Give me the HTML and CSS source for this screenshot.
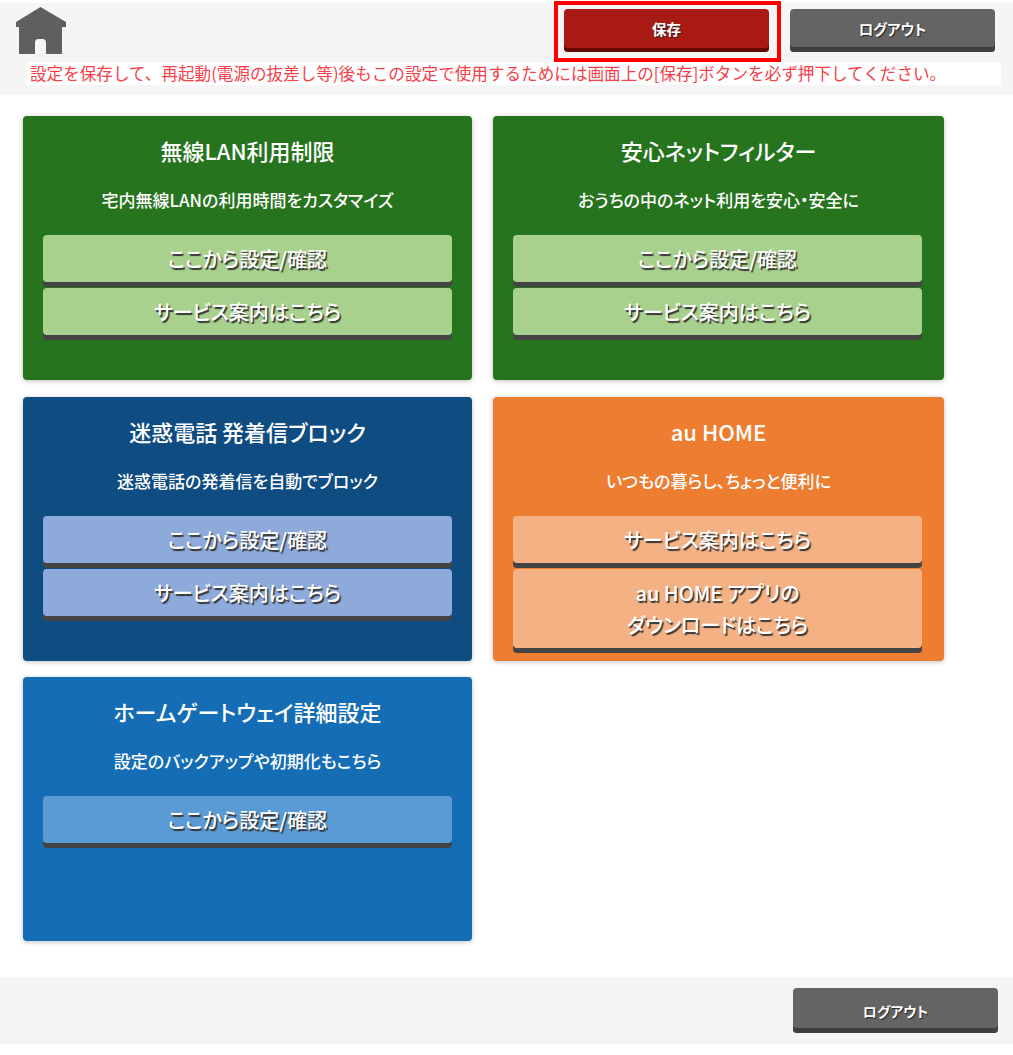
FILE: index.html
```html
<!DOCTYPE html>
<html lang="ja">
<head>
<meta charset="utf-8">
<title>ホームゲートウェイ設定</title>
<link rel="stylesheet" href="styles.css">
</head>
<body>
<header class="top">
  <div class="top-row">
    <svg class="home" viewBox="0 0 50 48" aria-label="ホーム"><path d="M24.500 0 L50 15 V20 H46 V47 H30 V36 Q30 32 26.500 32 H22.500 Q19 32 19 36 V47 H3 V20 H0 V15 Z" fill="#5f5f5f"/></svg>
    <div class="top-actions">
      <div class="save-wrap"><a class="btn-dark btn-save">保存</a></div>
      <a class="btn-dark btn-logout">ログアウト</a>
    </div>
  </div>
  <p class="notice">設定を保存して、再起動(電源の抜差し等)後もこの設定で使用するためには画面上の[保存]ボタンを必ず押下してください。</p>
</header>
<main class="grid">
  <section class="card green">
    <h2>無線LAN利用制限</h2>
    <p>宅内無線LANの利用時間をカスタマイズ</p>
    <a class="btn">ここから設定/確認</a>
    <a class="btn">サービス案内はこちら</a>
  </section>
  <section class="card green">
    <h2>安心ネットフィルター</h2>
    <p>おうちの中のネット利用を安心・安全に</p>
    <a class="btn">ここから設定/確認</a>
    <a class="btn">サービス案内はこちら</a>
  </section>
  <section class="card navy">
    <h2>迷惑電話 発着信ブロック</h2>
    <p>迷惑電話の発着信を自動でブロック</p>
    <a class="btn">ここから設定/確認</a>
    <a class="btn">サービス案内はこちら</a>
  </section>
  <section class="card orange">
    <h2>au HOME</h2>
    <p>いつもの暮らし、ちょっと便利に</p>
    <a class="btn">サービス案内はこちら</a>
    <a class="btn">au HOME アプリの<br>ダウンロードはこちら</a>
  </section>
  <section class="card blue">
    <h2>ホームゲートウェイ詳細設定</h2>
    <p>設定のバックアップや初期化もこちら</p>
    <a class="btn">ここから設定/確認</a>
  </section>
</main>
<footer class="bottom">
  <a class="btn-dark btn-logout btn-foot">ログアウト</a>
</footer>
</body>
</html>
```
FILE: styles.css
```css
* { box-sizing: border-box; }
html, body { margin: 0; padding: 0; background: #fff; }
body {
  padding-top: 3px;
  font-family: "Noto Sans CJK JP", "Liberation Sans", sans-serif;
  color: #fff;
}
.top { height: 92px; background: #f5f5f5; display: flex; flex-direction: column; }
.top-row { height: 59px; display: flex; justify-content: space-between; align-items: flex-start; padding: 4px 18px 0 16px; }
.home { width: 50px; height: 48px; display: block; }
.top-actions { display: flex; align-items: flex-start; gap: 21px; padding-top: 2px; }
.save-wrap { position: relative; }
.save-wrap::after {
  content: "";
  position: absolute;
  left: -10px; right: -12px; top: -8px; bottom: -10px;
  border: 4px solid #f00;
}
.btn-dark {
  width: 205px; height: 43px;
  display: flex; align-items: center; justify-content: center;
  border-radius: 4px;
  padding-bottom: 4px;
  font-size: 14.500px; font-weight: 700;
  text-shadow: 1px 1px 1px #222;
  font-feature-settings: "palt";
}
.btn-save { background: #aa1a14; box-shadow: inset 0 -4px 0 #650a05; }
.btn-logout { background: #646464; box-shadow: inset 0 -5px 0 #3f3f3f; }
.btn-foot { height: 45px; padding-bottom: 0; font-size: 14px; }
.notice {
  margin: 0 12px 0 27px; height: 23px; padding-left: 3px;
  background: #fff; color: #f5404a;
  font-size: 16.600px; line-height: 22px; white-space: nowrap;
}
.grid {
  display: grid;
  grid-template-columns: 449px 451px;
  grid-auto-rows: 264px;
  column-gap: 21px; row-gap: 16.500px;
  padding: 21px 0 0 23px;
  height: 882px;
}
.card {
  border-radius: 4px;
  padding: 19px 20px 0;
  box-shadow: 0 1px 5px rgba(0,0,0,.25);
  display: flex; flex-direction: column;
  text-align: center;
  font-feature-settings: "palt";
}
.card h2 { margin: 0; font-size: 22px; line-height: 30px; font-weight: 500; }
.card p { margin: 21px 0 21px; font-size: 17px; line-height: 28px; font-weight: 500; }
.btn {
  display: block;
  width: 409px;
  margin-bottom: 6px;
  padding: 8px 0 7px;
  border-radius: 4px;
  font-size: 20px; line-height: 32px; font-weight: 500;
  text-shadow: 1.500px 1.500px 1px #333;
  box-shadow: 0 5px 0 #444;
}
.green { background: #27741f; }
.green .btn { background: #a9d18e; }
.navy { background: #0f4c81; }
.navy .btn { background: #8eaadb; }
.orange { background: #ed7d31; }
.orange .btn { background: #f4b183; }
.blue { background: #156db5; }
.blue .btn { background: #5b9bd5; }
.bottom {
  height: 67px; background: #f5f5f5;
  display: flex; justify-content: flex-end; align-items: flex-start;
  padding: 11px 15px 0 0;
}
```
